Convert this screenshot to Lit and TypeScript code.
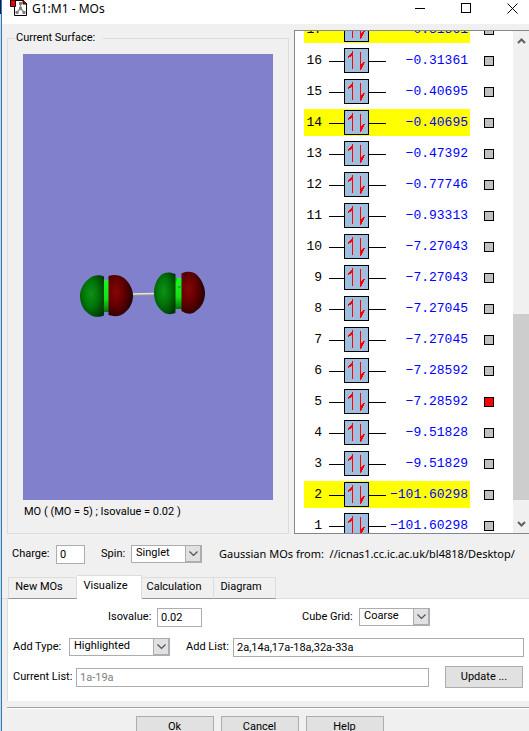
import { LitElement, html, css, svg } from "lit";
import { customElement, property, state } from "lit/decorators.js";
import { classMap } from "lit/directives/class-map.js";

interface Orbital {
  n: number;
  energy: string;
}

const ORBITALS: Orbital[] = [
  { n: 17, energy: "−0.31361" },
  { n: 16, energy: "−0.31361" },
  { n: 15, energy: "−0.40695" },
  { n: 14, energy: "−0.40695" },
  { n: 13, energy: "−0.47392" },
  { n: 12, energy: "−0.77746" },
  { n: 11, energy: "−0.93313" },
  { n: 10, energy: "−7.27043" },
  { n: 9, energy: "−7.27043" },
  { n: 8, energy: "−7.27045" },
  { n: 7, energy: "−7.27045" },
  { n: 6, energy: "−7.28592" },
  { n: 5, energy: "−7.28592" },
  { n: 4, energy: "−9.51828" },
  { n: 3, energy: "−9.51829" },
  { n: 2, energy: "−101.60298" },
  { n: 1, energy: "−101.60298" },
];

const HIGHLIGHTED = new Set([2, 14, 17]);

@customElement("mo-surface")
export class MoSurface extends LitElement {
  static styles = css`
    :host { display: block; background: #8080cc; aspect-ratio: 250 / 446; }
    svg { display: block; width: 100%; height: 100%; }
  `;

  render() {
    return html`<svg viewBox="0 0 250 446" role="img" aria-label="Molecular orbital 5">
      <defs>
        <radialGradient id="green" cx="0.45" cy="0.45" r="0.65">
          <stop offset="0" stop-color="#109018" />
          <stop offset="0.45" stop-color="#007808" />
          <stop offset="1" stop-color="#003800" />
        </radialGradient>
        <radialGradient id="red" cx="0.3" cy="0.42" r="0.75">
          <stop offset="0" stop-color="#860606" />
          <stop offset="0.4" stop-color="#680000" />
          <stop offset="1" stop-color="#1c0000" />
        </radialGradient>
        <linearGradient id="ring" x1="0" y1="0" x2="0" y2="1">
          <stop offset="0" stop-color="#18f820" />
          <stop offset="0.6" stop-color="#14e018" />
          <stop offset="1" stop-color="#067008" />
        </linearGradient>
      </defs>
      <path d="M109 241 L132 240.5" stroke="#909090" stroke-width="2.500" />
      <path d="M109 240 L132 239.500" stroke="#e4e4e4" stroke-width="1.5" />
      <path d="M80 226 H86 V258 H80 Z" fill="url(#ring)" />
      <path d="M81 222.5 C77 220.5 71 220.5 67 224 C60 229 57 236 57 242 C57 249 60 256 66 260 C70 263.5 77 263.5 81 261.5 Z" fill="url(#green)" />
      <path d="M85.5 222 C91 220 97 221 101 224 C107 229 110 236 110 242 C110 249 106 256 100 260 C95 263 90 262.5 85.5 261 Z" fill="url(#red)" />
      <path d="M151 224 H160 V255 H151 Z" fill="url(#ring)" />
      <path d="M153 227 V224 M155 233 H158" stroke="#0a8c10" />
      <path d="M152.5 220 C147 217.500 141 218 138 221 C133 226 131 233 131 239 C131 246 134 253 139 257 C143 260.500 148 261 152.500 259 Z" fill="url(#green)" />
      <path d="M158.500 219.500 C163 217 170 217 174 221 C179 226 182 233 182 239 C182 246 179 253 173 257 C169 261 163 260 158.500 257 Z" fill="url(#red)" />
    </svg>`;
  }
}

@customElement("orbital-list")
export class OrbitalList extends LitElement {
  @state() selected = 5;

  static styles = css`
    :host { display: flex; background: #fff; border: 1px solid #828790; border-right: 0; overflow: hidden; box-sizing: border-box; }
    .view { flex: 1; overflow: hidden; }
    table { border-collapse: separate; border-spacing: 0; table-layout: fixed; width: 199px; margin: -17px 0 0 9px; font: 13px "Liberation Mono", monospace; }
    td { height: 27px; padding: 0; border: solid #fff; border-width: 2px 0; background: #fff; }
    .hl { background: #ff0; }
    .num { width: 18px; text-align: right; color: #000; }
    .level { width: 65px; }
    .level svg { display: block; margin-left: 7px; }
    .energy { width: 83px; text-align: right; color: #00f; padding-right: 2px; box-sizing: border-box; }
    input { appearance: none; display: block; margin: 0 0 0 14px; width: 10px; height: 10px; background: #c0c0c0; border: 1px solid #000; }
    input:checked { background: #f00; }
    .scroll { width: 16px; display: flex; flex-direction: column; background: #f0f0f0; }
    .track { flex: 1; display: flex; flex-direction: column; }
    .before { flex: 264; }
    .thumb { flex: 186; background: #cdcdcd; }
    .after { flex: 14; }
    .arrow { border: 0; padding: 0; height: 19px; background: none; display: grid; place-items: center; }
  `;

  private row(o: Orbital) {
    const hl = HIGHLIGHTED.has(o.n);
    return html`<tr>
      <td class=${classMap({ num: true, hl })}>${o.n}</td>
      <td class=${classMap({ level: true, hl })}>
        <svg width="58" height="25" viewBox="0 0 58 25" aria-hidden="true">
          <path d="M0 13.500H57" stroke="#000" />
          <rect x="15.500" y="0.500" width="24" height="24" fill="#a0bfdf" stroke="#000" />
          <path d="M23.500 21V3 M22.500 5V8 M21.500 6V9 M20.500 7V9 M19.500 8V10" stroke="#f00" />
          <path d="M31.500 4V22 M32.500 16V21 M33.500 15V19 M34.500 14V17 M35.500 14V15" stroke="#f00" />
        </svg>
      </td>
      <td class=${classMap({ energy: true, hl })}>${o.energy}</td>
      <td>
        <input type="checkbox" aria-label="Orbital ${o.n}" .checked=${o.n === this.selected}
          @change=${() => (this.selected = o.n)} />
      </td>
    </tr>`;
  }

  render() {
    return html`
      <div class="view"><table><tbody>${ORBITALS.map((o) => this.row(o))}</tbody></table></div>
      <div class="scroll">
        <button class="arrow" aria-label="Scroll up"><svg width="9" height="6" viewBox="0 0 9 6"><path d="M1 5 L4.500 1.500 L8 5" fill="none" stroke="#606060" stroke-width="2" /></svg></button>
        <div class="track"><div class="before"></div><div class="thumb"></div><div class="after"></div></div>
        <button class="arrow" aria-label="Scroll down"><svg width="9" height="6" viewBox="0 0 9 6"><path d="M1 1 L4.500 4.500 L8 1" fill="none" stroke="#606060" stroke-width="2" /></svg></button>
      </div>`;
  }
}

@customElement("combo-box")
export class ComboBox extends LitElement {
  @property() label = "";
  @property({ type: Array }) options: string[] = [];

  static styles = css`
    :host { display: block; flex: none; }
    .combo { display: flex; align-items: center; }
    label { white-space: pre; flex: 1; }
    .field { display: grid; flex: none; width: var(--field, 71px); height: 18px; }
    select { grid-area: 1 / 1; appearance: none; margin: 0; padding: 0 0 2px 4px; border: 1px solid #abadb3; border-radius: 0; background: #fff; font: inherit; line-height: 14px; color: #000; width: 100%; }
    .arrow { grid-area: 1 / 1; justify-self: end; width: 17px; height: 18px; box-sizing: border-box; border: 1px solid #abadb3; border-bottom-width: 2px; border-right-width: 2px; background: #e1e1e1; display: grid; place-items: center; pointer-events: none; }
  `;

  render() {
    return html`<div class="combo">
      <label for="s">${this.label}</label>
      <div class="field">
        <select id="s">${this.options.map((o) => html`<option>${o}</option>`)}</select>
        <span class="arrow"><svg width="9" height="6" viewBox="0 0 9 6"><path d="M0.500 0.500 L4.500 4.500 L8.500 0.500" fill="none" stroke="#505050" stroke-width="1.200" /></svg></span>
      </div>
    </div>`;
  }
}

const appIcon = svg`
  <path d="M4.500 0.500V15.500H16.500V3.500L13.500 0.500Z" fill="#fff" stroke="#000" />
  <path d="M13 0V4H17" fill="#e00000" stroke="#000" />
  <path d="M10.500 3V8L7 12.500M10.500 8L14 12.500" fill="none" stroke="#909090" stroke-width="1.500" />
  <path d="M9 2H12V5H9Z M9 7H12V10H9Z M5.500 11H8.500V14H5.500Z M12.500 11H15.500V14H12.500Z" fill="#808080" />
  <path d="M0.500 0H5.500V6.500H0.500Z" fill="#f00000" stroke="#000" />`;

@customElement("app-root")
export class AppRoot extends LitElement {
  @state() tab = "Visualize";

  static styles = css`
    :host { display: block; height: 100vh; overflow: hidden; background: linear-gradient(#141838 14px, #d4d4d4 14px); font: 11px/16px Roboto, "Noto Sans", sans-serif; color: #000; }
    .window { margin-left: 1px; border-left: 1px solid #1a80c8; background: #f0f0f0; min-height: 100%; }
    .title { display: flex; align-items: flex-start; height: 24px; background: #fff; padding-left: 8px; gap: 4px; }
    h1 { flex: 1; margin: 0; font: 12px/17px "Noto Sans", sans-serif; }
    .title button { width: 46px; height: 17px; padding: 0; border: 0; background: none; display: grid; place-items: center; }
    .controls { display: flex; margin-right: -6px; }

    .top { display: grid; grid-template-columns: 282fr 235fr; column-gap: 5px; padding: 6px 0 0 5px; }
    fieldset { margin: 0; min-width: 0; border: 1px solid #dcdcdc; padding: 8px 15px 13px 15px; }
    legend { margin-left: -8px; padding: 0 8px 0 1px; }
    .caption { margin-top: 4px; padding-left: 1px; white-space: nowrap; }
    orbital-list { height: 0; min-height: 100%; }

    .state { display: flex; align-items: center; height: 20px; margin-top: 10px; padding-left: 10px; white-space: pre; }
    .state label { width: 44px; flex: none; }
    input { box-sizing: border-box; height: 19px; margin: 0; padding: 0 3px; border: 1px solid #abadb3; border-radius: 0; background: #fff; font: inherit; color: #000; min-width: 0; }
    input:disabled { color: #808080; }
    .charge { width: 29px; flex: none; }
    .spin { width: 101px; margin-left: 16px; }
    .source { margin-left: 17px; font-family: "Noto Sans", sans-serif; }

    .tabs { display: flex; align-items: flex-end; height: 24px; margin-top: 10px; padding-left: 6px; border-bottom: 1px solid #dcdcdc; }
    .tab { height: 22px; box-sizing: border-box; margin: 0; padding: 0 7px 2px 0; border: 1px solid #dcdcdc; border-left-width: 0; border-bottom: 1px solid #909896; margin-bottom: -1px; background: #f0f0f0; font: inherit; color: inherit; text-align: center; }
    .tab:first-child { border-left-width: 1px; }
    .tab.active { height: 24px; background: #fff; border-bottom-color: #fff; padding-bottom: 3px; }
    .w69 { width: 69px; } .w65 { width: 65px; } .w72 { width: 72px; } .w62 { width: 62px; }

    .panel { margin-left: 5px; border-left: 1px solid #dcdcdc; background: #fff; padding: 8px 5px 14px; display: grid; row-gap: 10px; }
    .row { display: flex; align-items: center; height: 20px; }
    .row label { white-space: pre; flex: none; }
    .iso { width: 49px; margin-left: 95px; }
    .iso-field { width: 45px; }
    .cube { width: 128px; margin-left: 100px; }
    .type { width: 157px; --field: 101px; }
    .add { width: 47px; margin-left: 16px; }
    .cur { width: 63px; }
    .grow { flex: 1; }
    .btn { box-sizing: border-box; height: 22px; margin: 0; padding: 0; border: 1px solid #adadad; border-radius: 0; background: #e1e1e1; font: inherit; color: #000; width: 78px; flex: none; }
    .update { margin: 0 1px 0 16px; }
    hr { margin: 6px 0 0 5px; border: 0; border-top: 1px solid #a0a0a0; border-bottom: 1px solid #fff; }
    .actions { display: flex; justify-content: center; gap: 7px; padding: 7px 12px 10px 0; }
  `;

  private tabButton(name: string, width: string) {
    const active = this.tab === name;
    return html`<button role="tab" aria-selected=${active}
      class=${classMap({ tab: true, active, [width]: true })}
      @click=${() => (this.tab = name)}>${name}</button>`;
  }

  render() {
    return html`<div class="window">
      <header class="title">
        <svg width="18" height="17" viewBox="0 0 18 17" aria-hidden="true">${appIcon}</svg>
        <h1>G1:M1 - MOs</h1>
        <div class="controls">
          <button aria-label="Minimize"><svg width="11" height="11"><path d="M0 5.500H10" stroke="#000" /></svg></button>
          <button aria-label="Maximize"><svg width="11" height="11"><rect x="0.500" y="0.500" width="9" height="9" fill="none" stroke="#000" /></svg></button>
          <button aria-label="Close"><svg width="11" height="11"><path d="M0.500 0.500L10.500 10.500M10.500 0.500L0.500 10.500" stroke="#000" /></svg></button>
        </div>
      </header>

      <div class="top">
        <fieldset>
          <legend>Current Surface:</legend>
          <mo-surface></mo-surface>
          <div class="caption">MO ( (MO = 5) ; Isovalue = 0.02 )</div>
        </fieldset>
        <orbital-list></orbital-list>
      </div>

      <div class="state">
        <label for="charge">Charge:</label>
        <input id="charge" class="charge" value="0" />
        <combo-box class="spin" label="Spin:" .options=${["Singlet", "Triplet"]}></combo-box>
        <span class="source">Gaussian MOs from:  //icnas1.cc.ic.ac.uk/bl4818/Desktop/</span>
      </div>

      <div class="tabs" role="tablist">
        ${this.tabButton("New MOs", "w69")}
        ${this.tabButton("Visualize", "w65")}
        ${this.tabButton("Calculation", "w72")}
        ${this.tabButton("Diagram", "w62")}
      </div>
      <div class="panel" role="tabpanel">
        <div class="row">
          <label class="iso" for="iso">Isovalue:</label>
          <input id="iso" class="iso-field" value="0.02" />
          <combo-box class="cube" label="Cube Grid:" .options=${["Coarse", "Medium", "Fine"]}></combo-box>
        </div>
        <div class="row">
          <combo-box class="type" label="Add Type:" .options=${["Highlighted", "All"]}></combo-box>
          <label class="add" for="add">Add List:</label>
          <input id="add" class="grow" value="2a,14a,17a-18a,32a-33a" />
        </div>
        <div class="row">
          <label class="cur" for="cur">Current List:</label>
          <input id="cur" class="grow" value="1a-19a" disabled />
          <button class="btn update">Update ...</button>
        </div>
      </div>
      <hr />
      <div class="actions">
        <button class="btn">Ok</button>
        <button class="btn">Cancel</button>
        <button class="btn">Help</button>
      </div>
    </div>`;
  }
}
